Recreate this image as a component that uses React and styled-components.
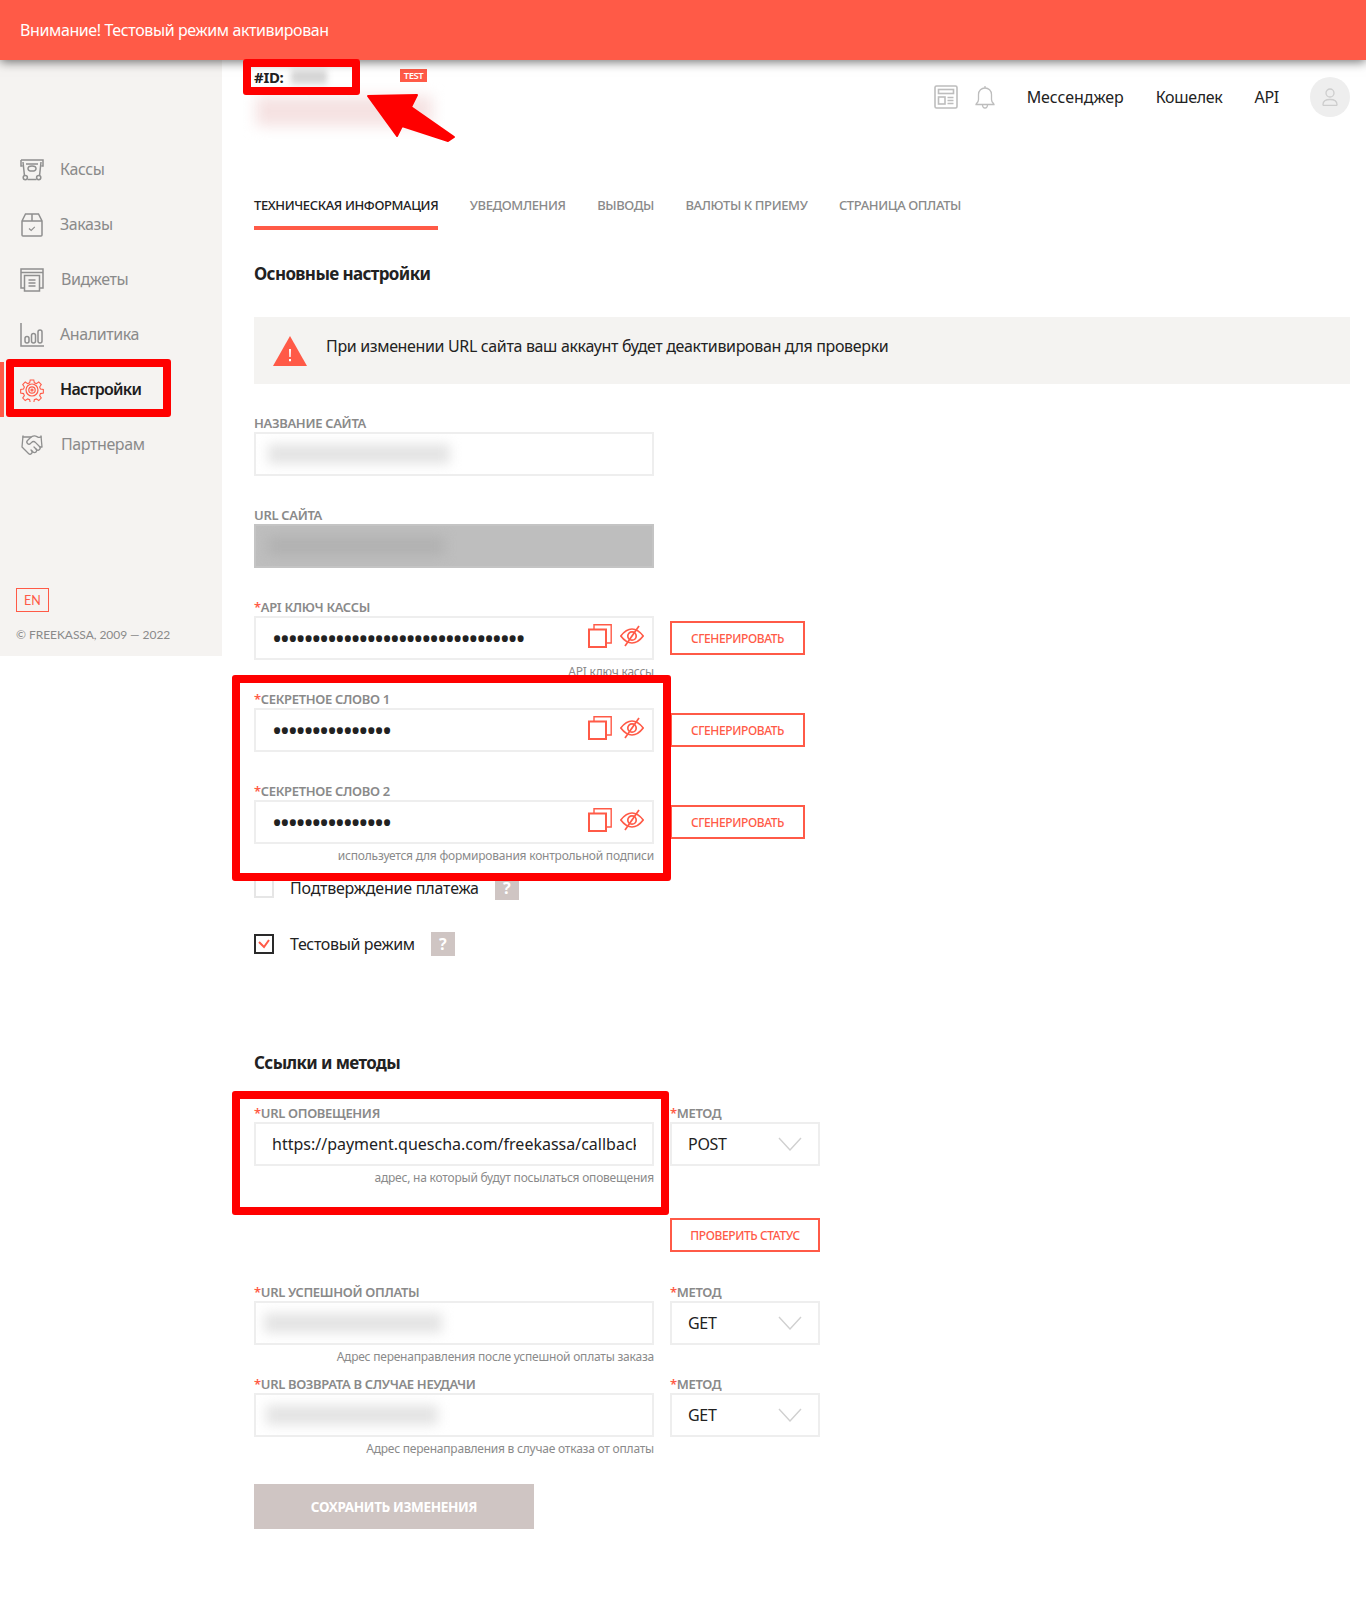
import React from 'react';
import styled, { createGlobalStyle } from 'styled-components';
import { Handshake } from 'lucide-react';

const RED = '#ff5a47';
const GREY = '#8a8a8a';
const FONT = '"Noto Sans", "Open Sans", sans-serif';

const GlobalStyle = createGlobalStyle`
  html, body {
    margin: 0;
    background: #fff;
    font-family: ${FONT};
    color: #222;
  }
  * { box-sizing: border-box; }
`;

const Page = styled.div`
  position: relative;
  width: 1366px;
  height: 1611px;
  overflow: hidden;
`;

const Banner = styled.div`
  position: relative;
  z-index: 2;
  height: 60px;
  padding-left: 20px;
  display: flex;
  align-items: center;
  background: ${RED};
  box-shadow: 0 2px 10px rgba(0, 0, 0, 0.55);
  color: #fff;
  font-size: 16px;
  letter-spacing: -0.39px;
`;

const Body = styled.div`
  display: flex;
  align-items: flex-start;
`;

const Sidebar = styled.aside`
  width: 222px;
  height: 596px;
  flex: none;
  padding-top: 82px;
  background: #f5f3f1;
`;

const NavItem = styled.div`
  height: 55px;
  padding-left: 20px;
  display: flex;
  align-items: center;
  gap: 16px;
  font-size: 16px;
  letter-spacing: ${p => (p.$active ? '-0.7px' : '-0.4px')};
  color: ${p => (p.$active ? '#1d1d1d' : GREY)};
  font-weight: ${p => (p.$active ? 600 : 400)};
  box-shadow: ${p => (p.$active ? `inset 4px 0 0 ${RED}` : 'none')};
`;

const NavIcon = styled.span`
  width: 24px;
  height: 26px;
  flex: none;
  display: flex;
  align-items: center;
  justify-content: center;
`;

const NavLabel = styled.span`
  padding-bottom: 2px;
  margin-left: ${p => p.$ml || 0}px;
`;

const SideFooter = styled.div`
  margin-top: 116px;
  padding-left: 16px;
`;

const LangButton = styled.div`
  width: 33px;
  height: 24px;
  display: flex;
  align-items: center;
  justify-content: center;
  border: 1px solid ${RED};
  color: ${RED};
  font-family: Lato, "Noto Sans", sans-serif;
  font-size: 12.5px;
`;

const Copyright = styled.div`
  margin-top: 14px;
  font-family: Lato, "Noto Sans", sans-serif;
  font-size: 12px;
  line-height: 18px;
  letter-spacing: -0.05px;
  color: ${GREY};
`;

const Main = styled.main`
  flex: 1;
  padding: 0 16px 0 32px;
`;

const TopBar = styled.div`
  height: 130px;
  display: flex;
  justify-content: space-between;
  align-items: flex-start;
`;

const IdBlock = styled.div`
  padding-top: 8px;
`;

const IdRow = styled.div`
  width: 173px;
  height: 18px;
  display: flex;
  align-items: center;
  font-size: 15px;
  font-weight: 700;
  letter-spacing: -0.3px;
`;

const TestBadge = styled.span`
  width: 27px;
  height: 13px;
  margin: -3px 0 0 auto;
  line-height: 13px;
  text-align: center;
  background: ${RED};
  color: #fff;
  font-size: 9.5px;
  font-weight: 600;
  letter-spacing: -0.5px;
`;

const Blur = styled.div`
  width: ${p => p.$w}px;
  height: ${p => p.$h}px;
  flex: none;
  background: ${p => p.$c || '#e4e4e4'};
  filter: blur(${p => p.$r || 5}px);
`;

const IdBlur = styled(Blur)`
  margin-left: 7px;
`;

const NameBlur = styled(Blur)`
  margin: 10px 0 0 2px;
`;

const TopRight = styled.div`
  height: 74px;
  display: flex;
  align-items: center;
  color: #222;
  font-size: 16px;
  letter-spacing: -0.3px;
`;

const TopLink = styled.span`
  margin-left: ${p => p.$ml}px;
  letter-spacing: ${p => p.$ls || -0.3}px;
  display: flex;
`;

const Avatar = styled.div`
  width: 40px;
  height: 40px;
  margin-left: 31px;
  border-radius: 50%;
  background: #eee;
  display: flex;
  align-items: center;
  justify-content: center;
`;

const Tabs = styled.div`
  display: flex;
  gap: 31.5px;
`;

const Tab = styled.div`
  height: 40px;
  padding-top: 5px;
  line-height: 20px;
  font-size: 13px;
  font-weight: 500;
  letter-spacing: -0.38px;
  white-space: nowrap;
  color: ${p => (p.$active ? '#222' : GREY)};
  border-bottom: 4px solid ${p => (p.$active ? RED : 'transparent')};
`;

const Heading = styled.h2`
  margin: ${p => p.$mt}px 0 0;
  height: 24px;
  line-height: 24px;
  font-size: 17px;
  font-weight: 700;
  letter-spacing: -0.62px;
  color: #222;
`;

const Notice = styled.div`
  height: 67px;
  margin: 31px 0;
  padding-left: 19px;
  display: flex;
  align-items: center;
  gap: 19px;
  background: #f4f3f1;
  font-size: 16px;
  letter-spacing: -0.35px;
  color: #222;
`;

const NoticeText = styled.span`
  padding-bottom: 9px;
`;

const Row = styled.div`
  display: grid;
  grid-template-columns: 400px 150px;
  column-gap: 16px;
  align-items: start;
  margin-top: ${p => p.$mt || 0}px;
`;

const Field = styled.div`
  height: 92px;
`;

const WideField = styled(Field)`
  width: 400px;
`;

const Label = styled.div`
  height: 17px;
  line-height: 17px;
  font-size: 13px;
  font-weight: 600;
  letter-spacing: -0.33px;
  white-space: nowrap;
  color: ${GREY};
  b { color: ${RED}; font-weight: 600; }
`;

const Box = styled.div`
  height: 44px;
  padding: 0 16px;
  display: flex;
  align-items: center;
  border: 2px solid ${p => (p.$disabled ? '#c4c4c4' : '#eeeeee')};
  background: ${p => (p.$disabled ? '#bebebe' : '#fff')};
`;

const BlurBox = styled(Box)`
  padding: 0 ${p => p.$pad}px;
  overflow: hidden;
`;

const TextInput = styled.input`
  flex: 1;
  min-width: 0;
  width: 100%;
  border: 0;
  outline: 0;
  padding: 0;
  background: transparent;
  font-family: ${FONT};
  font-size: 16px;
  color: #222;
`;

const SecretInput = styled(TextInput)`
  font-size: 27px;
  letter-spacing: -2.3px;
`;

const SecretActions = styled.div`
  display: flex;
  align-items: center;
  gap: 8px;
  margin: -4px -8px 0 0;
`;

const Hint = styled.div`
  margin-top: 4px;
  line-height: 16px;
  font-size: 12px;
  letter-spacing: -0.22px;
  text-align: right;
  white-space: nowrap;
  color: ${GREY};
`;

const OutlineButton = styled.div`
  height: 34px;
  margin-top: ${p => p.$mt || 22}px;
  width: ${p => p.$w || 135}px;
  display: flex;
  align-items: center;
  justify-content: center;
  border: 2px solid ${RED};
  color: ${RED};
  font-size: 12px;
  font-weight: 500;
  letter-spacing: -0.4px;
`;

const CheckRow = styled.div`
  height: 24px;
  margin-top: ${p => p.$mt}px;
  display: flex;
  align-items: center;
  font-size: 16px;
  letter-spacing: ${p => p.$ls}px;
`;

const CheckBox = styled.span`
  width: 20px;
  height: 20px;
  flex: none;
  margin-right: 16px;
  display: flex;
  align-items: center;
  justify-content: center;
  border: 2px solid ${p => (p.$on ? '#2a2a2a' : '#e6e6e6')};
`;

const HelpMark = styled.span`
  width: 24px;
  height: 24px;
  margin-left: 16px;
  display: flex;
  align-items: center;
  justify-content: center;
  background: #cfc5c3;
  color: #fff;
  font-size: 16px;
  font-weight: 700;
`;

const SelectBox = styled(Box)`
  justify-content: space-between;
  padding-right: 16px;
  font-size: 16px;
  letter-spacing: -0.3px;
`;

const SaveButton = styled.div`
  width: 280px;
  height: 45px;
  margin-top: 16px;
  display: flex;
  align-items: center;
  justify-content: center;
  background: #cfc5c3;
  color: #fff;
  font-size: 13.5px;
  font-weight: 700;
  letter-spacing: -0.35px;
`;

// red marks drawn over the screenshot, they really sit on top of the page
const Mark = styled.div`
  position: absolute;
  z-index: 3;
  left: ${p => p.$x}px;
  top: ${p => p.$y}px;
  width: ${p => p.$w}px;
  height: ${p => p.$h}px;
  border: 8px solid #ff0000;
  border-radius: 3px;
`;

const ArrowWrap = styled.svg`
  position: absolute;
  z-index: 3;
  left: 360px;
  top: 90px;
`;

const IconKassa = () => (
  <svg width="24" height="22" viewBox="0 0 24 22" fill="none" stroke="#8f8f8f" strokeWidth="1.5">
    <path d="M1 1h22v6h-1.5M1 1v6h1.5M3 3l1.5 14M21 3l-1.5 14M7.500 20.500h9M6 5h12" />
    <ellipse cx="12" cy="9.500" rx="4" ry="2.600" />
    <circle cx="5.300" cy="18.600" r="2.100" />
    <circle cx="18.700" cy="18.600" r="2.100" />
  </svg>
);

const IconBox = () => (
  <svg width="24" height="24" viewBox="0 0 24 24" fill="none" stroke="#8f8f8f" strokeWidth="1.5">
    <path d="M2 8 5.500 1h13L22 8v14a1 1 0 0 1-1 1H3a1 1 0 0 1-1-1zM2 8h20M12 1v7" />
    <path d="M9 15.500l2.200 2 3.600-3.600" strokeWidth="1.2" />
  </svg>
);

const IconWidgets = () => (
  <svg width="24" height="24" viewBox="0 0 24 24" fill="none" stroke="#8f8f8f" strokeWidth="1.5">
    <path d="M4 20H1V1h22v19h-3M1 4.500h22" />
    <rect x="4.500" y="7.500" width="15" height="15.500" fill="#f5f3f1" />
    <path d="M8.500 12h7M8.500 15h7M8.500 18h7" />
  </svg>
);

const IconChart = () => (
  <svg width="24" height="24" viewBox="0 0 24 24" fill="none" stroke="#8f8f8f" strokeWidth="1.5">
    <path d="M1 0v23h23" />
    <rect x="5" y="13.500" width="4" height="6.500" rx="2" />
    <rect x="11.500" y="10.500" width="4" height="9.500" rx="2" />
    <rect x="18" y="7" width="4" height="13" rx="2" />
  </svg>
);

const IconGear = () => (
  <svg width="24" height="24" viewBox="0 0 24 24" fill="none" stroke={RED} strokeWidth="1.2">
    <path d="M10 .8h4l.6 3.200 2.200.9 2.700-1.800 2.800 2.800-1.800 2.700.9 2.200 3.200.6v4l-3.200.6-.9 2.200 1.800 2.700-2.800 2.800-2.700-1.800-2.200.9-.6 3.200h-4l-.6-3.200-2.200-.9-2.700 1.800-2.800-2.800 1.800-2.700-.9-2.200-3.200-.6v-4l3.200-.6.9-2.200-1.800-2.700 2.800-2.800 2.700 1.800 2.200-.9z" transform="translate(1.200 1.200) scale(.9)" />
    <circle cx="12" cy="12" r="6" />
    <circle cx="12" cy="12" r="3.200" />
    <circle cx="12" cy="12" r="1" />
  </svg>
);

const IconNews = () => (
  <svg width="24" height="24" viewBox="0 0 24 24" fill="none" stroke="#bdbdbd" strokeWidth="1.600">
    <rect x="1" y="1" width="22" height="22" rx="1.500" />
    <rect x="4.500" y="4.500" width="15" height="4" />
    <rect x="4.500" y="12" width="6.500" height="7" />
    <path d="M13.500 12.500h6M13.500 15.500h6M13.500 18.500h6" />
  </svg>
);

const IconBell = () => (
  <svg width="20" height="24" viewBox="0 0 20 24" fill="none" stroke="#bdbdbd" strokeWidth="1.300">
    <path d="M1 19.500c0-1 2.500-2 2.500-5V9.500C3.500 5.500 6.500 3 10 3s6.500 2.500 6.500 6.500v5c0 3 2.500 4 2.500 5z" />
    <path d="M10 3V1M7.500 19.500c0 2 1 3.500 2.500 3.500s2.500-1.500 2.500-3.500" />
  </svg>
);

const IconUser = () => (
  <svg width="18" height="18" viewBox="0 0 18 18" fill="none" stroke="#cdcdcd" strokeWidth="1.300">
    <circle cx="9" cy="5" r="4" />
    <path d="M2 16.500c0-3.500 2.500-5 7-5s7 1.500 7 5c0 .7-.4 1-1 1H3c-.6 0-1-.3-1-1z" />
  </svg>
);

const IconCopy = () => (
  <svg width="24" height="24" viewBox="0 0 24 24" fill="none" stroke={RED}>
    <path d="M6 5V.8h17.200V19H19" strokeWidth="1.400" />
    <rect x="1" y="5.500" width="17" height="17.500" strokeWidth="2" />
  </svg>
);

const IconEyeOff = () => (
  <svg width="24" height="22" viewBox="0 0 24 22" fill="none" stroke={RED} strokeWidth="1.700">
    <path d="M.8 11C5 5.500 8.500 4 12 4s7 1.500 11.200 7C19 16.500 15.500 18 12 18S5 16.500.8 11z" />
    <circle cx="12" cy="11" r="4.200" />
    <path d="M5 21 19 1" />
  </svg>
);

const IconChevron = () => (
  <svg width="24" height="14" viewBox="0 0 24 14" fill="none" stroke="#d0d0d0" strokeWidth="1.400">
    <path d="M1 1l11 12L23 1" />
  </svg>
);

const IconWarning = () => (
  <svg width="34" height="30" viewBox="0 0 34 30">
    <path d="M17 0 34 30H0z" fill={RED} />
    <path d="M16 13h2l-.3 8h-1.400zM16 23h2v2.200h-2z" fill="#fff" />
  </svg>
);

const SecretField = ({ label, value, hint }) => (
  <Row>
    <Field>
      <Label><b>*</b>{label}</Label>
      <Box>
        <SecretInput type="password" readOnly value={value} />
        <SecretActions>
          <IconCopy />
          <IconEyeOff />
        </SecretActions>
      </Box>
      {hint && <Hint>{hint}</Hint>}
    </Field>
    <OutlineButton>СГЕНЕРИРОВАТЬ</OutlineButton>
  </Row>
);

const MethodField = ({ value }) => (
  <Field>
    <Label><b>*</b>МЕТОД</Label>
    <SelectBox>
      {value}
      <IconChevron />
    </SelectBox>
  </Field>
);

const nav = [
  { title: 'Кассы', icon: <IconKassa /> },
  { title: 'Заказы', icon: <IconBox /> },
  { title: 'Виджеты', ml: 1, icon: <IconWidgets /> },
  { title: 'Аналитика', icon: <IconChart /> },
  { title: 'Настройки', active: true, icon: <IconGear /> },
  { title: 'Партнерам', ml: 1, icon: <Handshake size={28} strokeWidth={1.3} color="#8f8f8f" /> }
];

const tabs = ['ТЕХНИЧЕСКАЯ ИНФОРМАЦИЯ', 'УВЕДОМЛЕНИЯ', 'ВЫВОДЫ', 'ВАЛЮТЫ К ПРИЕМУ', 'СТРАНИЦА ОПЛАТЫ'];

export default function App() {
  return (
    <Page>
      <GlobalStyle />
      <Banner>Внимание! Тестовый режим активирован</Banner>
      <Body>
        <Sidebar>
          {nav.map(item => (
            <NavItem key={item.title} $active={item.active}>
              <NavIcon>{item.icon}</NavIcon>
              <NavLabel $ml={item.ml}>{item.title}</NavLabel>
            </NavItem>
          ))}
          <SideFooter>
            <LangButton>EN</LangButton>
            <Copyright>© FREEKASSA, 2009 — 2022</Copyright>
          </SideFooter>
        </Sidebar>
        <Main>
          <TopBar>
            <IdBlock>
              <IdRow>
                #ID: <IdBlur $w={36} $h={14} $r={3} $c="#d6d6d6" />
                <TestBadge>TEST</TestBadge>
              </IdRow>
              <NameBlur $w={176} $h={30} $r={7} $c="#f5e2e2" />
            </IdBlock>
            <TopRight>
              <IconNews />
              <TopLink $ml={17}><IconBell /></TopLink>
              <TopLink $ml={32} $ls={-0.05}>Мессенджер</TopLink>
              <TopLink $ml={32}>Кошелек</TopLink>
              <TopLink $ml={32}>API</TopLink>
              <Avatar><IconUser /></Avatar>
            </TopRight>
          </TopBar>

          <Tabs>
            {tabs.map((t, i) => <Tab key={t} $active={i === 0}>{t}</Tab>)}
          </Tabs>

          <Heading $mt={32}>Основные настройки</Heading>

          <Notice>
            <IconWarning />
            <NoticeText>При изменении URL сайта ваш аккаунт будет деактивирован для проверки</NoticeText>
          </Notice>

          <WideField>
            <Label>НАЗВАНИЕ САЙТА</Label>
            <BlurBox $pad={12}><Blur $w={182} $h={20} $r={6} /></BlurBox>
          </WideField>
          <WideField>
            <Label>URL САЙТА</Label>
            <BlurBox $pad={12} $disabled><Blur $w={176} $h={20} $r={6} $c="#b2b2b2" /></BlurBox>
          </WideField>

          <SecretField label="API КЛЮЧ КАССЫ" value="12345678901234567890123456789012" hint="API ключ кассы" />
          <SecretField label="СЕКРЕТНОЕ СЛОВО 1" value="123456789012345" />
          <SecretField label="СЕКРЕТНОЕ СЛОВО 2" value="123456789012345" hint="используется для формирования контрольной подписи" />

          <CheckRow $mt={1} $ls={-0.2}>
            <CheckBox />
            Подтверждение платежа
            <HelpMark>?</HelpMark>
          </CheckRow>
          <CheckRow $mt={32} $ls={-0.35}>
            <CheckBox $on>
              <svg width="12" height="10" viewBox="0 0 12 10" fill="none" stroke={RED} strokeWidth="2"><path d="M1 3l5 5 5-7" /></svg>
            </CheckBox>
            Тестовый режим
            <HelpMark>?</HelpMark>
          </CheckRow>

          <Heading $mt={95}>Ссылки и методы</Heading>

          <Row $mt={30}>
            <Field>
              <Label><b>*</b>URL ОПОВЕЩЕНИЯ</Label>
              <Box>
                <TextInput readOnly value="https://payment.quescha.com/freekassa/callback" />
              </Box>
              <Hint>адрес, на который будут посылаться оповещения</Hint>
            </Field>
            <MethodField value="POST" />
          </Row>
          <Row>
            <span />
            <OutlineButton $mt={21} $w={150}>ПРОВЕРИТЬ СТАТУС</OutlineButton>
          </Row>

          <Row $mt={32}>
            <Field>
              <Label><b>*</b>URL УСПЕШНОЙ ОПЛАТЫ</Label>
              <BlurBox $pad={8}><Blur $w={178} $h={20} $r={6} /></BlurBox>
              <Hint>Адрес перенаправления после успешной оплаты заказа</Hint>
            </Field>
            <MethodField value="GET" />
          </Row>
          <Row>
            <Field>
              <Label><b>*</b>URL ВОЗВРАТА В СЛУЧАЕ НЕУДАЧИ</Label>
              <BlurBox $pad={10}><Blur $w={172} $h={20} $r={6} /></BlurBox>
              <Hint>Адрес перенаправления в случае отказа от оплаты</Hint>
            </Field>
            <MethodField value="GET" />
          </Row>

          <SaveButton>СОХРАНИТЬ ИЗМЕНЕНИЯ</SaveButton>
        </Main>
      </Body>

      <Mark $x={243} $y={59} $w={117} $h={36} />
      <Mark $x={6} $y={359} $w={165} $h={58} />
      <Mark $x={232} $y={675} $w={439} $h={206} />
      <Mark $x={232} $y={1091} $w={437} $h={124} />
      <ArrowWrap width="100" height="56" viewBox="360 90 100 56">
        <path d="M368 96 417 95 411 107 454 137 448 141 402 126 397 136z" fill="#ff0000" stroke="#ff0000" strokeWidth="2" strokeLinejoin="round" />
      </ArrowWrap>
    </Page>
  );
}
